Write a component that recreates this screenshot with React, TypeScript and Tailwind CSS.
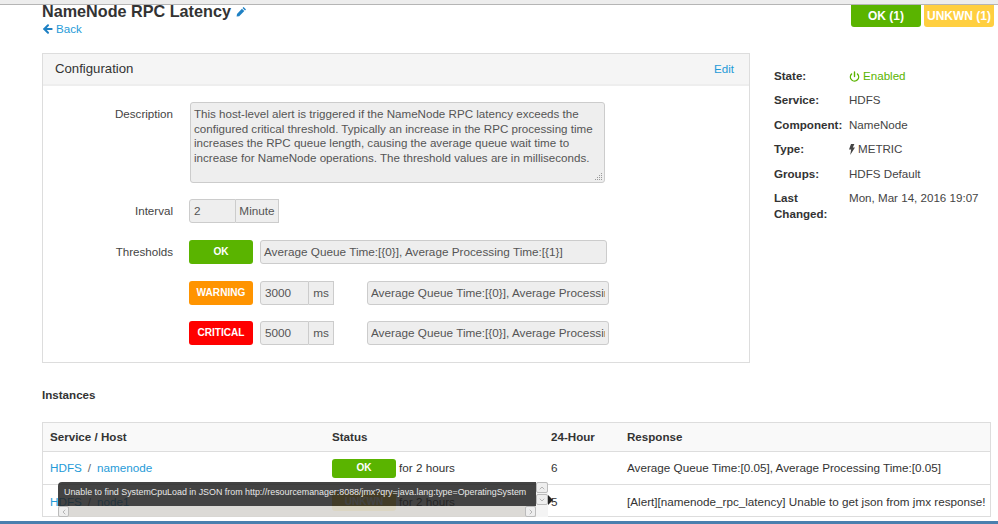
import React from "react";
import { ArrowLeft, Power, ChevronUp, ChevronDown, ChevronLeft, ChevronRight } from "lucide-react";

const FONT = "font-['Liberation_Sans',Arial,sans-serif]";
const field = "bg-[#eeeeee] border border-[#cccccc] rounded-[3px] text-[#555555]";

const Addon = ({ value, unit, inputW, unitW }: { value: string; unit: string; inputW: string; unitW: string }) => (
  <div className="flex h-[24px] text-[11.75px]">
    <div className={`${field} ${inputW} rounded-r-none px-1 leading-[22px]`}>{value}</div>
    <div className={`${unitW} bg-[#eeeeee] border border-l-0 border-[#cccccc] text-center leading-[22px] text-[#555555]`}>{unit}</div>
  </div>
);

const Badge = ({ label, bg }: { label: string; bg: string }) => (
  <div className={`${bg} w-[64px] h-[24px] shrink-0 rounded-[3px] text-white text-[10.1px] font-bold flex items-center justify-center`}>{label}</div>
);

const Info = ({ label, children }: { label: string; children: React.ReactNode }) => (
  <div className="flex">
    <div className="w-[75px] font-bold leading-[16px] text-[#333333]">{label}</div>
    <div className="leading-[16px] text-[#444444]">{children}</div>
  </div>
);

const Row = ({ service, host, last, children, count, response }: { service: string; host: string; last?: boolean; children: React.ReactNode; count: string; response: string }) => (
  <div className={`flex items-center h-[33px] text-[11.7px] ${last ? "" : "border-b border-[#dddddd]"}`}>
    <div className="w-[289px] pl-[7px] text-[#1f9bd8] flex gap-[6px]">
      <span>{service}</span><span className="text-[#666666]">/</span><span>{host}</span>
    </div>
    <div className="w-[219px] flex items-center gap-[3px] text-[#333333]">{children}</div>
    <div className="w-[76px] text-[#333333]">{count}</div>
    <div className="text-[#333333] whitespace-nowrap">{response}</div>
  </div>
);

const ScrollBtn = ({ children, className }: { children: React.ReactNode; className: string }) => (
  <div className={`${className} border border-[#bbbbbb] rounded-[2px] bg-[#eeeeee] flex items-center justify-center`}>{children}</div>
);

export default function App() {
  return (
    <div className={`${FONT} relative w-[998px] h-[524px] overflow-hidden bg-white text-[11.6px] flex flex-col`}>
      <div className="h-[5px] shrink-0 bg-[#ededed] border-b border-[#b5b5b5]" />

      <div className="flex-1 min-h-0 pl-[42px] flex flex-col">
        <div className="flex justify-between h-[48px] shrink-0">
          <div>
            <div className="flex items-center gap-[5px] h-[13px]">
              <h1 className="text-[16.2px] font-bold text-[#333333] leading-[13px] whitespace-nowrap">NameNode RPC Latency</h1>
              <svg width="11" height="11" viewBox="0 0 11 11">
                <path d="M7.6 1 10 3.4 9 4.5 6.5 2.1ZM5.9 2.7 8.3 5.1 3.2 10.2.6 10.6 1 8Z" fill="#1f81c4" />
              </svg>
            </div>
            <div className="flex items-center gap-[3px] mt-[2px] pl-[1px] text-[#1f9bd8]">
              <ArrowLeft size={10} strokeWidth={4} className="text-[#1f81c4] scale-125" />
              <span>Back</span>
            </div>
          </div>
          <div className="flex gap-[3px] mr-[4px] h-[22px]">
            <div className="w-[70px] bg-[#5ab400] rounded-b-[3px] text-white font-bold text-[12px] flex items-center justify-center">OK (1)</div>
            <div className="w-[70px] bg-[#ffcf40] rounded-b-[3px] text-white font-bold text-[12px] flex items-center justify-center whitespace-nowrap">UNKWN (1)</div>
          </div>
        </div>

        <div className="flex shrink-0">
          <div className="w-[708px] h-[310px] border border-[#dddddd] shrink-0">
            <div className="h-[32px] bg-[#f5f5f5] border-b-2 border-[#eeeeee] flex items-center justify-between pl-[12px] pr-[15px]">
              <span className="text-[13.2px] text-[#333333]">Configuration</span>
              <span className="text-[#1f9bd8]">Edit</span>
            </div>
            <div className="flex flex-col pt-[16px] text-[#555555]">
              <div className="flex">
                <div className="w-[130px] text-right pt-[3px] text-[#444444]">Description</div>
                <div className={`${field} ml-[17px] w-[415px] h-[81px] px-[3px] py-[4px] leading-[14.5px] relative`}>
                  This host-level alert is triggered if the NameNode RPC latency exceeds the configured critical threshold. Typically an increase in the RPC processing time increases the RPC queue length, causing the average queue wait time to increase for NameNode operations. The threshold values are in milliseconds.
                  <svg width="9" height="9" viewBox="0 0 9 9" className="absolute right-[1px] bottom-[1px]">
                    <g fill="#999999">
                      <rect x="7" y="1" width="1" height="1" /><rect x="5" y="3" width="1" height="1" /><rect x="7" y="3" width="1" height="1" />
                      <rect x="3" y="5" width="1" height="1" /><rect x="5" y="5" width="1" height="1" /><rect x="7" y="5" width="1" height="1" />
                      <rect x="1" y="7" width="1" height="1" /><rect x="3" y="7" width="1" height="1" /><rect x="5" y="7" width="1" height="1" /><rect x="7" y="7" width="1" height="1" />
                    </g>
                  </svg>
                </div>
              </div>

              <div className="flex items-center mt-[16px]">
                <div className="w-[130px] text-right text-[#444444]">Interval</div>
                <div className="ml-[16px]"><Addon value="2" unit="Minute" inputW="w-[47px]" unitW="w-[43px]" /></div>
              </div>

              <div className="flex items-center mt-[17px]">
                <div className="w-[130px] text-right text-[#444444]">Thresholds</div>
                <div className="ml-[16px] flex items-center gap-[7px]">
                  <Badge label="OK" bg="bg-[#5ab400]" />
                  <div className={`${field} w-[347px] h-[24px] pl-[3px] leading-[22px] text-[11.75px] whitespace-nowrap overflow-hidden`}>Average Queue Time:[{"{0}"}], Average Processing Time:[{"{1}"}]</div>
                </div>
              </div>

              {[["WARNING", "bg-[#ff9400]", "3000", "mt-[17px]"], ["CRITICAL", "bg-[#ff0000]", "5000", "mt-[16px]"]].map(([label, bg, v, top]) => (
                <div key={label} className={`flex items-center ${top} ml-[146px] gap-[7px]`}>
                  <Badge label={label} bg={bg} />
                  <Addon value={v} unit="ms" inputW="w-[49px]" unitW="w-[25px]" />
                  <div className={`${field} ml-[26px] w-[242px] h-[24px] px-[3px] leading-[22px] text-[11.75px]`}>
                    <div className="whitespace-nowrap overflow-hidden">Average Queue Time:[{"{0}"}], Average Processing Time:[{"{1}"}]</div>
                  </div>
                </div>
              ))}
            </div>
          </div>

          <div className="pl-[24px] pt-[15px] flex flex-col gap-[8.4px] flex-1">
            <Info label="State:">
              <span className="flex items-center gap-[3px] text-[#5ab400]"><Power size={11} strokeWidth={3} />Enabled</span>
            </Info>
            <Info label="Service:">HDFS</Info>
            <Info label="Component:">NameNode</Info>
            <Info label="Type:">
              <span className="flex items-center gap-[3px]">
                <svg width="6" height="11" viewBox="0 0 6 11"><path d="M2 0h3.4L3.8 3.6H6L1.2 11l1-5.6H0Z" fill="#444444" /></svg>
                METRIC
              </span>
            </Info>
            <Info label="Groups:">HDFS Default</Info>
            <Info label="Last Changed:">Mon, Mar 14, 2016 19:07</Info>
          </div>
        </div>

        <div className="mt-[24px] h-[16px] shrink-0 font-bold text-[#333333] leading-[16px]">Instances</div>

        <div className="mt-[19px] w-[949px] h-[95px] border border-[#dddddd] shrink-0">
          <div className="flex items-center h-[29px] bg-[#f9f9f9] border-b border-[#dddddd] font-bold text-[#333333]">
            <div className="w-[289px] pl-[7px]">Service / Host</div>
            <div className="w-[219px]">Status</div>
            <div className="w-[76px]">24-Hour</div>
            <div>Response</div>
          </div>
          <Row service="HDFS" host="namenode" count="6" response="Average Queue Time:[0.05], Average Processing Time:[0.05]">
            <Badge label="OK" bg="bg-[#5ab400] !h-[19px]" />
            <span>for 2 hours</span>
          </Row>
          <Row last service="HDFS" host="node1" count="5" response="[Alert][namenode_rpc_latency] Unable to get json from jmx response!">
            <Badge label="UNKWN" bg="bg-[#ffcf40] !h-[19px]" />
            <span>for 2 hours</span>
          </Row>
        </div>
      </div>

      <div className="h-[3px] shrink-0 bg-[#4a7fae]" />

      {/* tooltip over the last row */}
      <div className="absolute left-[58px] top-[482px] w-[478px] h-[35px]">
        <div className="h-[24px] bg-[#222222]/85 rounded-tl-[4px] text-[#e8e8e8] text-[8.9px] leading-[20px] pl-[6px] whitespace-nowrap">
          Unable to find SystemCpuLoad in JSON from http://resourcemanager:8088/jmx?qry=java.lang:type=OperatingSystem
        </div>
        <div className="h-[11px] bg-[#d8d6d2]/90 flex justify-between">
          <ScrollBtn className="w-[11px]"><ChevronLeft size={8} className="text-[#999999]" /></ScrollBtn>
          <ScrollBtn className="w-[11px]"><ChevronRight size={8} className="text-[#999999]" /></ScrollBtn>
        </div>
        <div className="absolute left-[478px] top-0 w-[12px] h-[35px] bg-[#f4f4f4] flex flex-col items-center gap-[1px]">
          <ScrollBtn className="w-[12px] h-[11px]"><ChevronUp size={8} className="text-[#999999]" /></ScrollBtn>
          <ScrollBtn className="w-[12px] h-[11px]"><ChevronDown size={8} className="text-[#999999]" /></ScrollBtn>
        </div>
        <div className="absolute left-[490px] top-[13px] w-0 h-0 border-y-[5px] border-y-transparent border-l-[5px] border-l-[#222222]" />
      </div>
    </div>
  );
}
